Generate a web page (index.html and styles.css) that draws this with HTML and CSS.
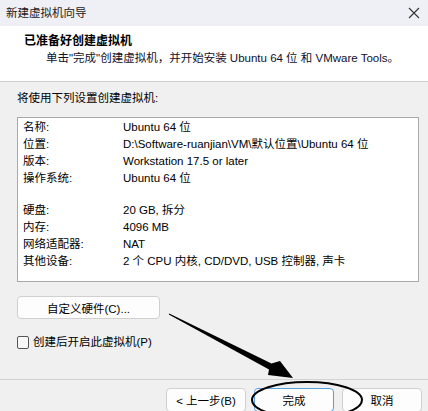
FILE: index.html
```html
<!DOCTYPE html>
<html lang="zh-CN">
<head>
<meta charset="utf-8">
<title>新建虚拟机向导</title>
<link rel="stylesheet" href="styles.css">
</head>
<body>
<div class="window">
  <div class="titlebar">
    <span class="title">新建虚拟机向导</span>
    <svg class="close" width="12" height="12" viewBox="0 0 12 12"><path d="M1 1 L11 11 M11 1 L1 11" stroke="#333" stroke-width="1.1" fill="none"/></svg>
  </div>
  <div class="header">
    <div class="heading">已准备好创建虚拟机</div>
    <div class="subtitle">单击"完成"创建虚拟机，并开始安装 Ubuntu 64 位 和 VMware Tools。</div>
  </div>
  <div class="body">
    <div class="intro">将使用下列设置创建虚拟机:</div>
    <div class="summary">
      <div class="row"><span class="label">名称:</span><span class="value">Ubuntu 64 位</span></div>
      <div class="row"><span class="label">位置:</span><span class="value">D:\Software-ruanjian\VM\默认位置\Ubuntu 64 位</span></div>
      <div class="row"><span class="label">版本:</span><span class="value">Workstation 17.5 or later</span></div>
      <div class="row"><span class="label">操作系统:</span><span class="value">Ubuntu 64 位</span></div>
      <div class="spacer"></div>
      <div class="row"><span class="label">硬盘:</span><span class="value">20 GB, 拆分</span></div>
      <div class="row"><span class="label">内存:</span><span class="value">4096 MB</span></div>
      <div class="row"><span class="label">网络适配器:</span><span class="value">NAT</span></div>
      <div class="row"><span class="label">其他设备:</span><span class="value">2 个 CPU 内核, CD/DVD, USB 控制器, 声卡</span></div>
    </div>
    <div class="btn custom">自定义硬件(C)...</div>
    <label class="check"><span class="box"></span><span>创建后开启此虚拟机(P)</span></label>
  </div>
  <div class="footer">
    <div class="btn nav">&lt; 上一步(B)</div>
    <div class="btn nav primary">完成</div>
    <div class="btn nav">取消</div>
  </div>
  <svg class="annot" width="428" height="411" viewBox="0 0 428 411">
    <polygon points="168.8,314.4 169.2,313.6 271.5,363.5 280,361 293,378 268,375 269,369.5" fill="#000"/>
    <ellipse cx="307" cy="400" rx="55" ry="18" fill="none" stroke="#000" stroke-width="2"/>
  </svg>
</div>
</body>
</html>
```
FILE: styles.css
```css
* { box-sizing: border-box; }
html, body { margin: 0; padding: 0; }
body {
  font-family: "Liberation Sans", "Noto Sans CJK SC", sans-serif;
  font-size: 11.5px;
  color: #000;
  background: #f0f0f0;
}
.window {
  position: relative;
  width: 428px;
  height: 411px;
  overflow: hidden;
  background: #f0f0f0;
}
.titlebar {
  height: 26px;
  background: #eef0f6;
  display: flex;
  align-items: center;
  justify-content: space-between;
  padding: 0 8px 0 6px;
}
.title { line-height: 26px; color: #1a1a1a; }
.close { display: block; }
.header {
  height: 56px;
  background: #fff;
  border-bottom: 1px solid #cfcfcf;
  padding: 7px 0 0 24px;
}
.heading { font-weight: bold; font-size: 12px; line-height: 16px; }
.subtitle { line-height: 16px; margin-top: 1px; padding-left: 22px; color: #10102a; }
.body {
  height: 297px;
  padding: 8px 9px 0 17px;
}
.intro { line-height: 16px; }
.summary {
  margin-top: 11px;
  height: 165px;
  background: #fff;
  border: 1px solid #a9a9a9;
  padding: 1px 0 0 5px;
}
.row { display: flex; height: 17px; line-height: 17px; }
.label { width: 100px; flex: none; }
.spacer { height: 15px; }
.btn {
  background: #fdfdfd;
  border: 1px solid #d0d0d0;
  border-radius: 4px;
  display: flex;
  align-items: center;
  justify-content: center;
}
.custom {
  margin-top: 14px;
  width: 143px;
  height: 23px;
}
.check {
  margin-top: 17px;
  display: flex;
  align-items: center;
  gap: 4px;
  line-height: 13px;
}
.box {
  width: 12px;
  height: 13px;
  border: 1px solid #555;
  border-radius: 2px;
  background: #f8f8f8;
}
.footer {
  border-top: 1px solid #d2d2d2;
  display: flex;
  justify-content: flex-end;
  gap: 8px;
  padding: 8px 6px 0 0;
}
.nav { width: 80px; height: 24px; }
.primary { border-color: #5b9ee0; }
.annot { position: absolute; left: 0; top: 0; pointer-events: none; }
```
